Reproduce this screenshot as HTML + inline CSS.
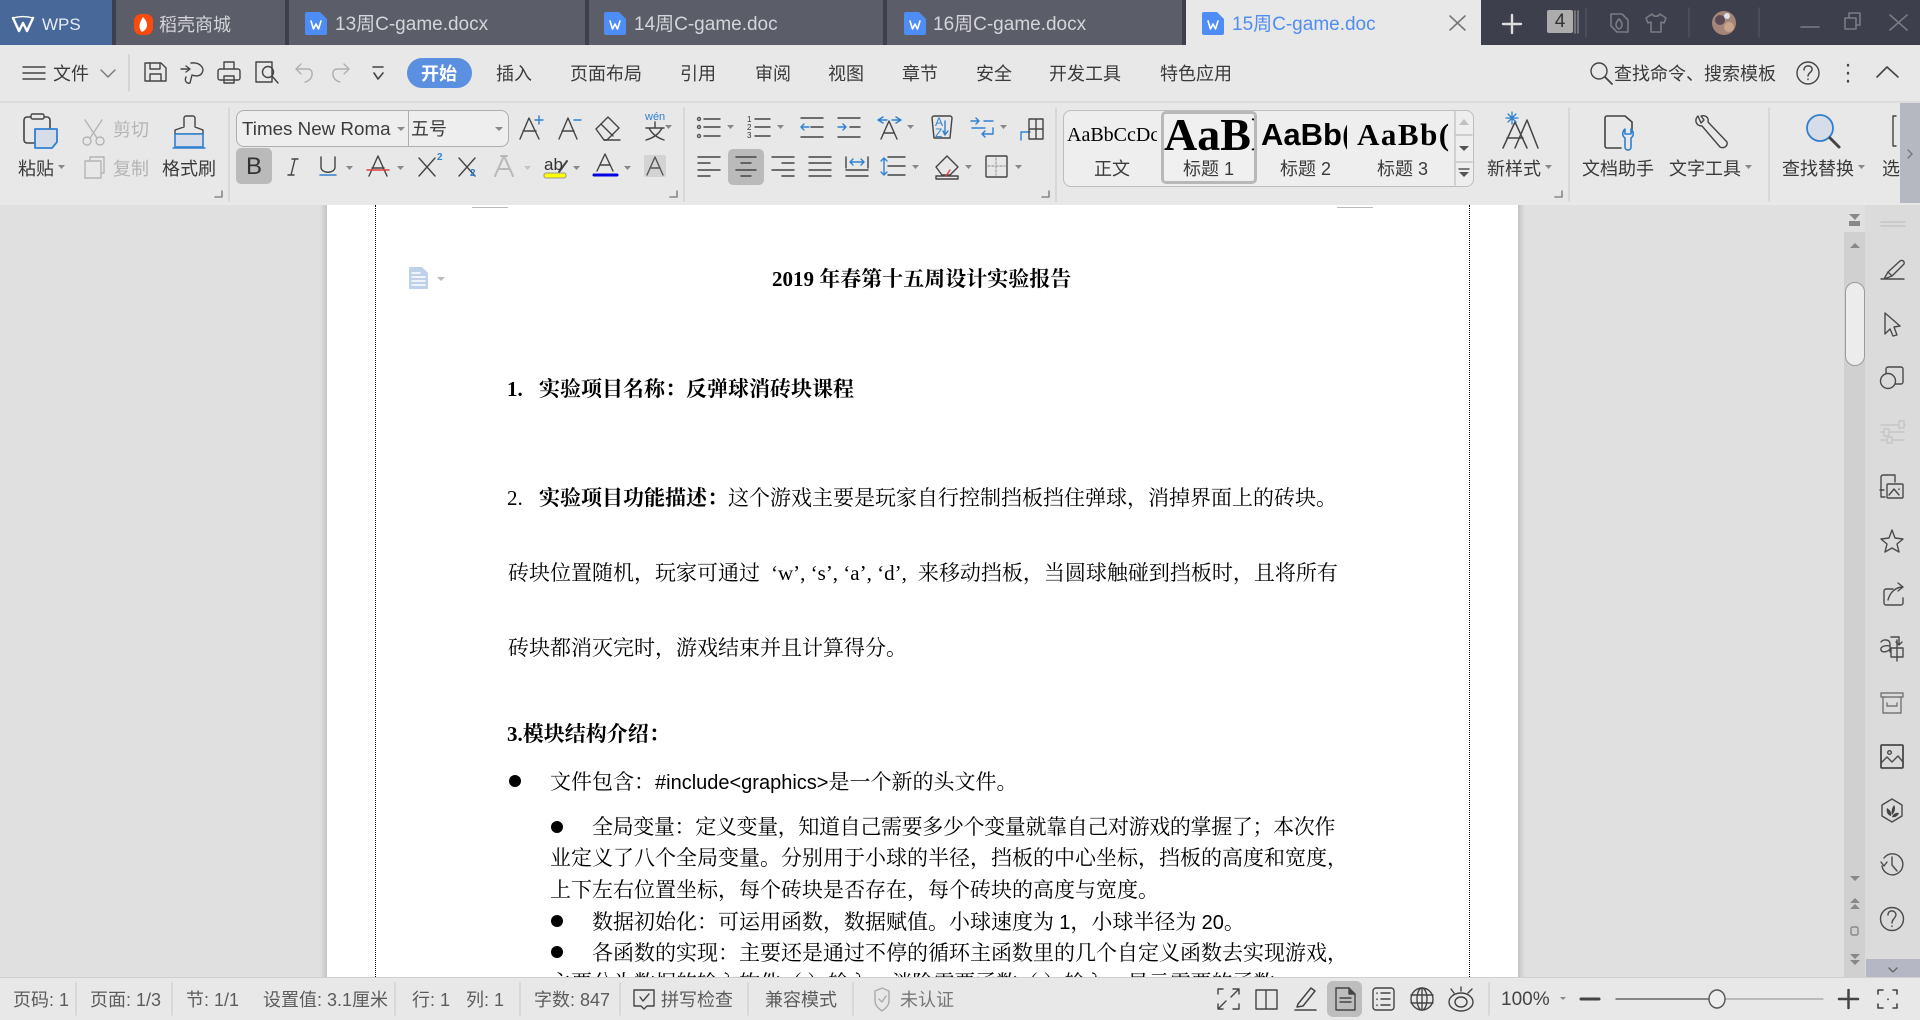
<!DOCTYPE html>
<html lang="zh-CN"><head><meta charset="utf-8"><title>15周C-game.doc - WPS</title>
<style>
html,body{margin:0;padding:0;width:1920px;height:1020px;overflow:hidden;background:#e0e0e0}
body{position:relative;font-family:"Liberation Sans","Noto Sans CJK SC",sans-serif;color:#3c3c3c}
.b{position:absolute}
.t{position:absolute;white-space:nowrap;line-height:30px;height:30px;font-size:18px}
.tab{color:#d4d5da;font-size:19px}
.m{color:#3a3a3a;font-size:18px}
.g{color:#b4b4b4;font-size:18px}
.s{color:#5c5c5c;font-size:18px}
.d{position:absolute;white-space:nowrap;line-height:30px;height:30px;font-size:21px;color:#000;font-family:"Liberation Serif","Noto Serif CJK SC",serif}
.d b{font-weight:700}
.c{font-family:"Liberation Sans","Noto Serif CJK SC",sans-serif;font-size:20px}
svg{position:absolute;left:0;top:0}
</style></head><body>
<!-- title bar -->
<div class="b" style="left:0;top:0;width:1920px;height:45px;background:#3d3f4c"></div>
<div class="b" style="left:0;top:0;width:112px;height:45px;background:#49689a"></div>
<div class="b" style="left:116px;top:0;width:169px;height:45px;background:#5b5d68"></div>
<div class="b" style="left:289px;top:0;width:296px;height:45px;background:#5b5d68"></div>
<div class="b" style="left:589px;top:0;width:294px;height:45px;background:#5b5d68"></div>
<div class="b" style="left:887px;top:0;width:295px;height:45px;background:#5b5d68"></div>
<div class="b" style="left:1186px;top:0;width:295px;height:45px;background:#e8e8e8"></div>
<!-- menu row -->
<div class="b" style="left:0;top:45px;width:1920px;height:56px;background:#e8e8e8"></div>
<div class="b" style="left:0;top:101px;width:1920px;height:2px;background:#dcdcdc"></div>
<div class="b" style="left:0;top:103px;width:1920px;height:102px;background:#e8e8e8"></div>
<div class="b" style="left:1900px;top:103px;width:20px;height:100px;background:#b5b8c0"></div>
<!-- workspace -->
<div class="b" style="left:0;top:205px;width:1844px;height:772px;background:#e0e0e0"></div>
<div class="b" style="left:320px;top:205px;width:7px;height:772px;background:linear-gradient(90deg,#e0e0e0,#c4c4c4)"></div>
<div class="b" style="left:1518px;top:205px;width:7px;height:772px;background:linear-gradient(90deg,#c4c4c4,#e0e0e0)"></div>
<div class="b" style="left:327px;top:205px;width:1191px;height:772px;background:#fff;overflow:hidden"></div>
<div class="b" style="left:375px;top:205px;height:772px;border-left:1px dotted #000"></div>
<div class="b" style="left:1469px;top:205px;height:772px;border-left:1px dotted #000"></div>
<div class="b" style="left:472px;top:207px;width:36px;height:1px;background:#bbb"></div>
<div class="b" style="left:1337px;top:207px;width:36px;height:1px;background:#bbb"></div>
<!-- scrollbar & sidebar -->
<div class="b" style="left:1844px;top:232px;width:21px;height:745px;background:#d0d0d0"></div>
<div class="b" style="left:1865px;top:205px;width:55px;height:772px;background:#dbdbdb"></div>
<div class="b" style="left:1845px;top:282px;width:18px;height:82px;background:#ececec;border:1px solid #9c9c9c;border-radius:10px"></div>
<div class="b" style="left:1866px;top:959px;width:54px;height:18px;background:#b5b8c4"></div>
<!-- status -->
<div class="b" style="left:0;top:977px;width:1920px;height:43px;background:#e8e8e8;border-top:1px solid #cfcfcf;box-sizing:border-box"></div>
<div class="b" style="left:1327px;top:981px;width:35px;height:36px;background:#bdbdbd;border-radius:6px"></div>
<!-- highlights -->
<div class="b" style="left:407px;top:58px;width:65px;height:30px;background:#5b8fe0;border-radius:15px"></div>
<div class="b" style="left:236px;top:148px;width:36px;height:36px;background:#bababa;border-radius:5px"></div>
<div class="b" style="left:728px;top:149px;width:36px;height:36px;background:#bababa;border-radius:5px"></div>
<div class="b" style="left:644px;top:155px;width:22px;height:22px;background:#d3d3d3;border-radius:2px"></div>
<div class="b" style="left:236px;top:110px;width:271px;height:35px;border:1px solid #aeaeae;border-radius:8px;background:#eee"></div>
<div class="b" style="left:408px;top:110px;width:1px;height:36px;background:#aeaeae"></div>
<div class="b" style="left:1063px;top:110px;width:409px;height:75px;border:1px solid #bdbdbd;border-radius:8px;background:#eee"></div>
<div class="b" style="left:1161px;top:111px;width:90px;height:67px;border:3px solid #b8b8b8;border-radius:5px;background:#f0f0f0"></div>

<svg width="1920" height="1020" viewBox="0 0 1920 1020" fill="none" stroke="#444" stroke-width="1.4" stroke-linecap="round" stroke-linejoin="round">
<!-- logos -->
<path d="M13 18L19 31L23 23L27 31L33 18" stroke="#fff" stroke-width="2.4"/>
<path d="M13 18C20 16 26 16 33 18" stroke="#fff" stroke-width="1.4"/>
<rect x="134" y="14" width="19" height="21" rx="7" fill="#fb4a0c" stroke="none"/>
<path d="M143 17C139 23 138 28 142 32C148 29 149 23 143 17Z" fill="#fff" stroke="none"/>
<g stroke="none" fill="#4d8df5">
<path d="M307 12H320L327 19V33a2 2 0 0 1-2 2H307a2 2 0 0 1-2-2V14a2 2 0 0 1 2-2Z"/>
<path d="M606 12H619L626 19V33a2 2 0 0 1-2 2H606a2 2 0 0 1-2-2V14a2 2 0 0 1 2-2Z"/>
<path d="M906 12H919L926 19V33a2 2 0 0 1-2 2H906a2 2 0 0 1-2-2V14a2 2 0 0 1 2-2Z"/>
<path d="M1204 12H1217L1224 19V33a2 2 0 0 1-2 2H1204a2 2 0 0 1-2-2V14a2 2 0 0 1 2-2Z"/>
</g>
<g stroke="#fff" stroke-width="1.6">
<path d="M311 21L313.500 29L316 24L318.500 29L321 21"/><path d="M610 21L612.500 29L615 24L617.500 29L620 21"/><path d="M910 21L912.500 29L915 24L917.500 29L920 21"/><path d="M1208 21L1210.500 29L1213 24L1215.500 29L1218 21"/>
</g>
<path d="M1450 16L1465 30M1465 16L1450 30" stroke="#777" stroke-width="1.6"/>
<path d="M1512 15V33M1503 24H1521" stroke="#ddd" stroke-width="2.4"/>
<rect x="1547" y="10" width="26" height="23" rx="2" fill="#acacac" stroke="none"/>
<path d="M1575 11V33M1578 11V33" stroke="#8c8c8c"/>
<g stroke="#50525e"><path d="M1586 8V37M1689 8V37M1759 8V37"/></g>
<g stroke="#7a7b84" stroke-width="1.6">
<path d="M1611 14H1622L1628 20V32H1617L1611 26Z"/><path d="M1619 19C1615 23 1615 27 1619 29C1623 27 1623 23 1619 19Z"/>
<path d="M1652 14L1646 18L1648 23L1651 22V32H1661V22L1664 23L1666 18L1660 14C1658 17 1654 17 1652 14Z"/>
<path d="M1801 27H1819"/><path d="M1845 18V29H1856V18ZM1849 18V13H1860V25H1856"/><path d="M1890 15L1907 30M1907 15L1890 30"/>
</g>
<circle cx="1724" cy="23" r="12" fill="#a58577" stroke="none"/>
<circle cx="1720" cy="20" r="5" fill="#5a4a55" stroke="none"/><circle cx="1729" cy="27" r="5" fill="#c9a58e" stroke="none"/><circle cx="1727" cy="16" r="3" fill="#dfe3e8" stroke="none"/>
<!-- menu row icons -->
<path d="M23 67H45M23 73H45M23 79H45"/>
<path d="M101 70L108 77L115 70" stroke="#777"/>
<path d="M129 55V91" stroke="#ccc"/>
<path d="M145 63H161L166 68V81H145Z"/><path d="M150 63V69H160V63M150 81V74H161V81"/>
<path d="M181 69H189M186 66L190 69L186 72"/><path d="M191 63C200 62 205 68 202 73C199 78 192 75 192 75L190 83M186 77C184 81 187 84 190 83"/>
<path d="M224 69V62H234V69"/><rect x="218" y="69" width="22" height="11" rx="2"/><path d="M224 76H234V83H224Z"/>
<path d="M256 62H272V82H256Z"/><circle cx="268" cy="72" r="5.5"/><path d="M272 76L278 83"/>
<g stroke="#b0b0b0"><path d="M296 69H308C314 69 314 80 305 82M296 69L301 64M296 69L301 74"/><path d="M349 69H337C331 69 331 80 340 82M349 69L344 64M349 69L344 74"/></g>
<path d="M373 67H383M374 73L378 79L383 73" stroke-width="1.6"/>
<!-- right of menu -->
<circle cx="1599" cy="71" r="8"/><path d="M1605 77L1612 84" stroke-width="1.8"/>
<circle cx="1808" cy="73" r="11"/><path d="M1804 70C1804 64 1813 65 1812 70C1811 73 1808 73 1808 76M1808 79V79.5"/>
<path d="M1848 65V65.5M1848 73V73.5M1848 81V81.5" stroke-width="2.4"/>
<path d="M1877 77L1887 67L1898 77" stroke-width="1.6"/>
<!-- paste -->
<path d="M34 143H27A3 3 0 0 1 24 140V120A3 3 0 0 1 27 117H47A3 3 0 0 1 50 120V128" stroke-width="1.6"/><rect x="31" y="114" width="13" height="5" rx="1.500" fill="#e8e8e8"/>
<path d="M35 129H57V142L52 148H35Z" fill="#d6dde8" stroke="#2f80d0" stroke-width="1.8"/>
<!-- cut copy -->
<g stroke="#b4b4b4"><circle cx="87" cy="141" r="4"/><circle cx="100" cy="141" r="4"/><path d="M90 138L102 120M97 138L85 120"/><path d="M90 161H101V178H85V161ZM90 161V157H104V173H101"/></g>
<!-- format brush -->
<path d="M184 127V118A2 2 0 0 1 186 116H193A2 2 0 0 1 195 118V127L203 130V134H175V130Z"/><path d="M175 134H203V147H175Z" fill="#d6dde8" stroke="#2f80d0" stroke-width="1.6"/><path d="M173 148H205" stroke="#2f80d0"/>
<!-- dividers -->
<path d="M229 108V201M684 108V201M1056 108V201M1569 108V201M1769 108V201" stroke="#d2d2d2"/>
<!-- corner marks -->
<g stroke="#888" stroke-width="1.6"><path d="M215 197H222V191M670 197H677V191M1042 197H1049V191M1555 197H1562V191"/></g>
<!-- dropdown arrows -->
<g fill="#888" stroke="none">
<path d="M397 127H405L401 131Z"/><path d="M495 127H503L499 131Z"/>
<path d="M58 165H65L61.5 169Z"/><path d="M346 166H353L349.5 170Z"/><path d="M397 166H404L400.500 170Z"/><path d="M573 166H580L576.5 170Z"/><path d="M624 166H631L627.500 170Z"/>
<path d="M665 125H672L668.500 129Z"/><path d="M727 125H734L730.500 129Z"/><path d="M777 125H784L780.500 129Z"/><path d="M907 125H914L910.500 129Z"/><path d="M1000 125H1007L1003.500 129Z"/>
<path d="M912 165H919L915.500 169Z"/><path d="M965 165H972L968.500 169Z"/><path d="M1015 165H1022L1018.500 169Z"/>
<path d="M1545 165H1552L1548.500 169Z"/><path d="M1745 165H1752L1748.500 169Z"/><path d="M1858 165H1865L1861.500 169Z"/>
<path d="M1560 997H1566L1563 1000Z"/>
</g>
<path fill="#c4c4c4" stroke="none" d="M524 166H531L527.500 170Z"/>
<!-- A+ A- eraser -->
<path d="M520 139L529 118L539 139M523 131H536"/><path d="M535 120H543M539 116V124" stroke="#2f80d0"/>
<path d="M559 139L568 118L577 139M562 131H574"/><path d="M574 120H581" stroke="#2f80d0"/>
<path d="M596 129L608 117L619 128L607 140H604Z"/><path d="M601 124L613 136M604 140H620"/>
<!-- wen -->
<path d="M646 128H664M655 122V128M649 128C652 134 658 138 664 140M662 128C659 134 653 138 646 140"/>
<!-- B row -->
<path d="M292 159H298M288 175H294M295 159L291 175"/>
<path d="M321 157V167C321 174 335 174 335 167V157"/><path d="M320 175H336" stroke="#2f80d0" stroke-width="1.5"/>
<path d="M369 176L378 156L387 176M372 168H384"/><path d="M367 170H389" stroke="#e24040" stroke-width="1.4"/>
<path d="M419 158L435 176M435 158L419 176M459 158L475 176M475 158L459 176"/>
<path d="M495 176L504 156L513 176M499 169H509M501 156H507" stroke="#b8b8b8" stroke-width="2"/>
<path d="M567 161L559 172" stroke-width="2"/>
<rect x="544" y="173" width="22" height="5" rx="2" fill="#ffff00" stroke="#999" stroke-width="1"/>
<path d="M597 171L605 154L613 171M600 165H610"/><path d="M594 175H617" stroke="#0000e0" stroke-width="3"/>
<path d="M647 175L655 157L663 175M650 168H660" stroke="#555"/>
<!-- bullets -->
<g fill="none"><circle cx="699" cy="119" r="1.5" stroke="#555"/><circle cx="699" cy="127" r="1.5" stroke="#555"/><circle cx="699" cy="136" r="1.5" stroke="#555"/><path d="M704 119H720M704 127H720M704 136H720"/>
<path d="M755 119H770M755 127H770M755 136H770"/>
<path d="M801 118H823M811 127H823M801 137H823"/><path d="M809 127H801M804 124L801 127L804 130" stroke="#2f80d0"/>
<path d="M838 118H860M850 127H860M838 137H860"/><path d="M838 127H846M843 124L846 127L843 130" stroke="#2f80d0"/>
<path d="M881 139L889 121L897 139M884 133H894"/><path d="M878 120L883 117M878 120L883 123M878 120H887M901 120L896 117M901 120L896 123M901 120H892" stroke="#2f80d0"/>
<path d="M932 118A2 2 0 0 1 934 116H950A2 2 0 0 1 952 118L950 138H934Z"/><path d="M945 121V135M945 135L943 131M945 135L948 131" stroke="#2f80d0"/>
<path d="M971 121H978M976 118L979 121L976 124M984 121H993M972 128H985M993 128V134H982M982 134L985 131M982 134L985 137" stroke="#2f80d0"/>
<path d="M1021 132V140M1021 132H1030" stroke="#2f80d0"/><path d="M1029 119H1043V139H1029V119M1029 129H1043M1036 119V139"/>
<!-- aligns -->
<path d="M698 157H720M698 163H710M698 170H720M698 176H710"/>
<path d="M736 157H756M741 163H751M736 170H756M741 176H751"/>
<path d="M772 157H794M782 163H794M772 170H794M782 176H794"/>
<path d="M809 157H831M809 163H831M809 170H831M809 176H831"/>
<path d="M846 157V168M868 157V168M846 170H868M846 176H868"/><path d="M850 162H864M850 162L853 159M850 162L853 165M864 162L861 159M864 162L861 165" stroke="#2f80d0"/>
<path d="M888 157H905M888 166H905M888 175H905"/><path d="M884 158V175M884 158L881 161M884 158L887 161M884 175L881 172M884 175L887 172" stroke="#2f80d0"/>
<path d="M947 156L958 167L950 175H942L936 167Z"/><path d="M936 176H958V179H936Z"/><path d="M946 176L950 170" stroke="#e24040"/>
<rect x="986" y="156" width="21" height="21" rx="1"/><path d="M996 158V175M988 166H1005" stroke="#aaa" stroke-dasharray="2 2"/>
</g>
<path d="M1455 111V185M1455 135H1472M1455 162H1472" stroke="#c4c4c4"/>
<g fill="#c0c0c0" stroke="none"><path d="M1459 125L1464 119L1469 125Z"/></g>
<g fill="#555" stroke="none"><path d="M1459 146H1469L1464 151Z"/><path d="M1459 172H1469L1464 177Z"/></g>
<path d="M1459 169H1469" stroke="#555"/>
<!-- new style -->
<path d="M1503 148L1515 122L1527 148M1507 138H1523M1515 148L1527 120L1538 148" stroke-width="1.5"/>
<path d="M1512 112V124M1506 118H1518M1508 114L1516 122M1516 114L1508 122" stroke="#2f80d0" stroke-width="1.3"/>
<!-- doc helper -->
<path d="M1632 132V122L1625 116H1607A2 2 0 0 0 1605 118V146A2 2 0 0 0 1607 148H1621" stroke-width="1.6"/>
<path d="M1625 129C1622 132 1622 136 1625 138V147C1625 151 1631 151 1631 147V138C1634 136 1634 132 1631 129V134H1625Z" stroke="#2f80d0" stroke-width="1.6"/>
<!-- wrench -->
<path d="M1698 116C1694 120 1696 126 1702 126L1720 147C1724 149 1728 146 1727 142L1708 122C1709 117 1705 115 1701 116L1704 120L1701 123Z"/>
<!-- search -->
<circle cx="1820" cy="128" r="13" fill="#d6dde8" stroke="#2f80d0" stroke-width="1.8"/><path d="M1830 138L1839 147" stroke-width="3"/>
<path d="M1896 116H1893V146H1896"/>
<path d="M1908 150L1912 154L1908 158" stroke="#777"/>
<!-- doc marker -->
<path d="M409 267H422L428 273V289H409Z" fill="#bfd0ea" stroke="none"/>
<path d="M412 273H420M412 277H425M412 281H425M412 285H425" stroke="#fff"/>
<path d="M437 277H445L441 281Z" fill="#bbb" stroke="none"/>
<!-- bullet dots -->
<g fill="#000" stroke="none"><circle cx="515" cy="781" r="6"/><circle cx="557" cy="827" r="6"/><circle cx="557" cy="921" r="6"/><circle cx="557" cy="952" r="6"/></g>
<!-- scrollbar glyphs -->
<g fill="#888" stroke="none">
<path d="M1849 214H1860L1855 220Z"/><rect x="1849" y="221" width="11" height="5"/>
<path d="M1850 248L1855 243L1860 248Z"/>
<path d="M1850 876H1860L1855 881Z"/>
<path d="M1850 903L1855 898L1860 903ZM1850 909L1855 904L1860 909Z"/>
<path d="M1850 954H1860L1855 959ZM1850 960H1860L1855 965Z"/>
</g>
<rect x="1851" y="927" width="7" height="8" rx="1.500" stroke="#888"/>
<path d="M1889 968L1893 972L1897 968" stroke="#666"/>
<!-- sidebar -->
<path d="M1881 222H1905M1881 226H1905" stroke="#c4c4c4"/>
<g stroke="#4a4a4a">
<path d="M1881 279H1904M1884 279L1888 272L1900 261C1903 259 1906 263 1903 265L1892 276L1884 279M1888 272L1892 276"/>
<path d="M1885 313L1900 326L1894 327L1897 335L1893 336L1890 329L1885 334Z"/>
<rect x="1886" y="367" width="17" height="17" rx="2"/><circle cx="1888" cy="381" r="7.500" fill="#dbdbdb"/>
<path d="M1881 497V477A2 2 0 0 1 1883 475H1895V482M1880 490H1884M1881 497H1885"/><rect x="1887" y="484" width="16" height="14" rx="1"/><path d="M1889 495L1894 489L1899 495M1899 489V489.500"/>
<path d="M1892 530L1895 538L1903 539L1897 544L1899 552L1892 548L1885 552L1887 544L1881 539L1889 538Z"/>
<path d="M1893 589H1886A2 2 0 0 0 1884 591V603A2 2 0 0 0 1886 605H1901A2 2 0 0 0 1903 603V598"/><path d="M1888 600C1890 592 1896 587 1903 587M1898 583L1903 587L1898 591"/>
<path d="M1881 642C1883 639 1890 639 1890 644V652M1890 646C1884 645 1880 647 1881 650C1882 653 1888 652 1890 649"/><rect x="1891" y="648" width="12" height="9"/><path d="M1897 640V661M1891 637H1899V644M1896 642L1899 645L1902 642"/>
<rect x="1881" y="693" width="22" height="4" stroke="#777"/><path d="M1883 697V713H1901V697M1887 703V706H1897V703" stroke="#777"/>
<rect x="1881" y="745" width="22" height="23" rx="1" stroke-width="1.8"/><circle cx="1889.500" cy="752.500" r="1.800"/><path d="M1881 763L1887 757L1892 762L1898 756L1903 762"/>
<path d="M1892 799L1902 805V816L1892 822L1882 816V805Z"/>
<path d="M1891 816C1887 815 1886 811 1887 808C1890 810 1892 812 1891 816ZM1892 815C1891 811 1892 808 1894 805C1896 808 1895 812 1892 815ZM1892 817C1893 814 1896 812 1899 813C1898 816 1895 818 1892 817Z" fill="#444" stroke="none"/>
<path d="M1884 858A10.500 10.500 0 1 1 1882 866M1881 862L1884 866L1887 862M1892 857V865L1897 871"/>
<circle cx="1892" cy="919" r="11.500"/><path d="M1888 915C1888 909 1896 910 1896 915C1895 919 1892 919 1892 923M1892 926V926.500"/>
</g>
<path d="M1881 425H1899M1904 425H1905M1881 432H1884M1889 432H1904M1881 440H1887M1892 440H1904M1899 421H1904V428H1899ZM1884 429H1889V436H1884ZM1887 437H1892V443H1887Z" stroke="#c6c6c6"/>
<!-- status separators -->
<path d="M76 983V1015M172 983V1015M395 983V1015M520 983V1015M620 983V1015M748 983V1015M853 983V1015M1489 983V1015" stroke="#d2d2d2"/>
<!-- status icons -->
<path d="M634 990H654V1006H647L644 1009L641 1006H634Z"/><path d="M640 997L643 1001L649 994"/>
<path d="M882 988L889 991V1001C889 1006 885 1009 882 1011C879 1009 875 1006 875 1001V991Z" stroke="#aaa"/><path d="M879 999L882 1002L886 996" stroke="#aaa"/>
<path d="M1218 994V989H1223M1233 989H1239V994M1239 1004V1009H1233M1223 1009H1218V1004M1219 1008L1226 1001M1238 990L1231 997"/>
<path d="M1256 990H1266V1009H1256ZM1266 990H1277V1009H1266"/>
<path d="M1298 1004L1311 988L1315 991L1303 1006L1297 1007ZM1295 1010H1316" stroke-width="1.500"/>
<path d="M1336 988H1349L1355 994V1010H1336Z"/><path d="M1340 998H1351M1340 1002H1351" stroke-width="1.400"/><path d="M1349 988V994H1355" fill="#444"/>
<rect x="1373" y="988" width="21" height="22" rx="3"/><path d="M1377 993V993.500M1377 999V999.500M1377 1005V1005.500M1381 993H1390M1381 999H1390M1381 1005H1390"/>
<circle cx="1422" cy="999" r="11"/><ellipse cx="1422" cy="999" rx="5" ry="11"/><path d="M1422 988V1010M1411 995H1433M1411 1003H1433"/>
<ellipse cx="1461" cy="1002" rx="12" ry="9"/><ellipse cx="1461" cy="1002" rx="6" ry="5"/><path d="M1461 987V991M1451 989L1454 993M1472 989L1468 993"/>
<path d="M1581 999H1599" stroke-width="3"/>
<path d="M1616 999H1717" stroke="#666"/><path d="M1717 999H1823" stroke="#aaa"/>
<ellipse cx="1717" cy="999" rx="8" ry="9" fill="#eee" stroke="#555"/>
<path d="M1848.500 990V1008M1839 999H1858" stroke-width="2.500"/>
<path d="M1878 994V990H1883M1893 990H1897V994M1897 1004V1008H1893M1883 1008H1878V1004M1888 999V999.500" stroke-width="1.600"/>
</svg>

<!-- tab text -->
<div class="t" style="left:42px;top:10px;color:#e6ecf5;font-size:17px">WPS</div>
<div class="t tab" style="left:159px;top:10px;font-size:18px">稻壳商城</div>
<div class="t tab" style="left:335px;top:10px">13周C-game.docx</div>
<div class="t tab" style="left:634px;top:10px">14周C-game.doc</div>
<div class="t tab" style="left:933px;top:10px">16周C-game.docx</div>
<div class="t tab" style="left:1232px;top:10px;color:#4f8ef0">15周C-game.doc</div>
<div class="t" style="left:1547px;top:7px;width:26px;text-align:center;font-size:19px;color:#333">4</div>
<!-- menu -->
<div class="t m" style="left:53px;top:59px">文件</div>
<div class="t" style="left:421px;top:59px;color:#fff;font-weight:700">开始</div>
<div class="t m" style="left:496px;top:59px">插入</div>
<div class="t m" style="left:570px;top:59px">页面布局</div>
<div class="t m" style="left:680px;top:59px">引用</div>
<div class="t m" style="left:755px;top:59px">审阅</div>
<div class="t m" style="left:828px;top:59px">视图</div>
<div class="t m" style="left:902px;top:59px">章节</div>
<div class="t m" style="left:976px;top:59px">安全</div>
<div class="t m" style="left:1049px;top:59px">开发工具</div>
<div class="t m" style="left:1160px;top:59px">特色应用</div>
<div class="t m" style="left:1614px;top:59px">查找命令、搜索模板</div>
<!-- ribbon text -->
<div class="t m" style="left:18px;top:154px">粘贴</div>
<div class="t g" style="left:113px;top:115px">剪切</div>
<div class="t g" style="left:113px;top:154px">复制</div>
<div class="t m" style="left:162px;top:154px">格式刷</div>
<div class="t" style="left:242px;top:114px;font-size:18.800px;color:#3c3c3c">Times New Roma</div>
<div class="t" style="left:411px;top:114px;color:#3c3c3c">五号</div>
<div class="t" style="left:246px;top:152px;font-size:24px;color:#333">B</div>
<div class="t" style="left:437px;top:143px;font-size:10px;color:#2f80d0;font-weight:700">2</div>
<div class="t" style="left:470px;top:159px;font-size:10px;color:#2f80d0;font-weight:700">2</div>
<div class="t" style="left:544px;top:150px;font-size:17px;color:#333">ab</div>
<div class="t" style="left:645px;top:102px;font-size:11px;color:#2f80d0">wén</div>
<div class="t" style="left:747px;top:105px;font-size:8px;color:#333">1</div>
<div class="t" style="left:747px;top:113px;font-size:8px;color:#333">2</div>
<div class="t" style="left:747px;top:121px;font-size:8px;color:#333">3</div>
<div class="t" style="left:935px;top:107px;font-size:12px;color:#2f80d0">A</div>
<div class="t" style="left:935px;top:118px;font-size:12px;color:#2f80d0">Z</div>
<!-- styles -->
<div class="b" style="left:1067px;top:112px;width:90px;height:45px;overflow:hidden"><div class="t" style="left:0;top:8px;font:20px/30px 'Liberation Serif',serif;color:#000">AaBbCcDc</div></div>
<div class="b" style="left:1164px;top:112px;width:90px;height:46px;overflow:hidden"><div class="t" style="left:0;top:8px;font:700 46px/30px 'Liberation Serif',serif;color:#000">AaBl</div></div>
<div class="b" style="left:1261px;top:112px;width:86px;height:46px;overflow:hidden"><div class="t" style="left:0;top:8px;font:700 31px/30px 'Liberation Sans',sans-serif;color:#000">AaBb(</div></div>
<div class="b" style="left:1357px;top:112px;width:92px;height:46px;overflow:hidden"><div class="t" style="left:0;top:8px;font:700 31px/30px 'Liberation Serif',serif;color:#000;letter-spacing:1.500px">AaBb(</div></div>
<div class="t m" style="left:1094px;top:154px">正文</div>
<div class="t m" style="left:1183px;top:154px">标题 1</div>
<div class="t m" style="left:1280px;top:154px">标题 2</div>
<div class="t m" style="left:1377px;top:154px">标题 3</div>
<div class="t m" style="left:1487px;top:154px">新样式</div>
<div class="t m" style="left:1582px;top:154px">文档助手</div>
<div class="t m" style="left:1669px;top:154px">文字工具</div>
<div class="t m" style="left:1782px;top:154px">查找替换</div>
<div class="b" style="left:1882px;top:154px;width:18px;height:30px;overflow:hidden"><div class="t m" style="left:0;top:0">选择</div></div>
<!-- document -->
<div class="d" style="left:772px;top:264px"><b>2019 年春第十五周设计实验报告</b></div>
<div class="d" style="left:507px;top:374px"><b>1.</b></div>
<div class="d" style="left:539px;top:374px"><b>实验项目名称：反弹球消砖块课程</b></div>
<div class="d" style="left:507px;top:483px">2.</div>
<div class="d" style="left:539px;top:483px"><b>实验项目功能描述：</b>这个游戏主要是玩家自行控制挡板挡住弹球，消掉界面上的砖块。</div>
<div class="d" style="left:508px;top:558px">砖块位置随机，玩家可通过<span style="margin-left:11px">‘w’, ‘s’, ‘a’, ‘d’,</span><span style="margin-left:11px">来移动挡板，</span>当圆球触碰到挡板时，且将所有</div>
<div class="d" style="left:508px;top:633px">砖块都消灭完时，游戏结束并且计算得分。</div>
<div class="d" style="left:507px;top:719px"><b>3.模块结构介绍：</b></div>
<div class="d" style="left:550px;top:767px">文件包含：<span class="c">#include&lt;graphics&gt;</span>是一个新的头文件。</div>
<div class="d" style="left:592px;top:812px;letter-spacing:-0.360px">全局变量：定义变量，知道自己需要多少个变量就靠自己对游戏的掌握了；本次作</div>
<div class="d" style="left:550px;top:843px">业定义了八个全局变量。分别用于小球的半径，挡板的中心坐标，挡板的高度和宽度，</div>
<div class="d" style="left:550px;top:875px">上下左右位置坐标，每个砖块是否存在，每个砖块的高度与宽度。</div>
<div class="d" style="left:592px;top:907px">数据初始化：可运用函数，数据赋值。小球速度为 <span class="c">1</span>，小球半径为 <span class="c">20</span>。</div>
<div class="d" style="left:592px;top:938px">各函数的实现：主要还是通过不停的循环主函数里的几个自定义函数去实现游戏，</div>
<div class="b" style="left:550px;top:968px;width:790px;height:9px;overflow:hidden"><div class="d" style="left:0;top:0">主要分为数据的输入软件（          ）输入，消除需要函数（ ）输入，显示需要的函数</div></div>
<!-- status -->
<div class="t s" style="left:13px;top:985px">页码: 1</div>
<div class="t s" style="left:90px;top:985px">页面: 1/3</div>
<div class="t s" style="left:186px;top:985px">节: 1/1</div>
<div class="t s" style="left:263px;top:985px">设置值: 3.1厘米</div>
<div class="t s" style="left:412px;top:985px">行: 1</div>
<div class="t s" style="left:466px;top:985px">列: 1</div>
<div class="t s" style="left:534px;top:985px">字数: 847</div>
<div class="t s" style="left:661px;top:985px">拼写检查</div>
<div class="t s" style="left:765px;top:985px">兼容模式</div>
<div class="t s" style="left:900px;top:985px;color:#777">未认证</div>
<div class="t s" style="left:1501px;top:985px;font-size:19px;color:#444">100%</div>
</body></html>
